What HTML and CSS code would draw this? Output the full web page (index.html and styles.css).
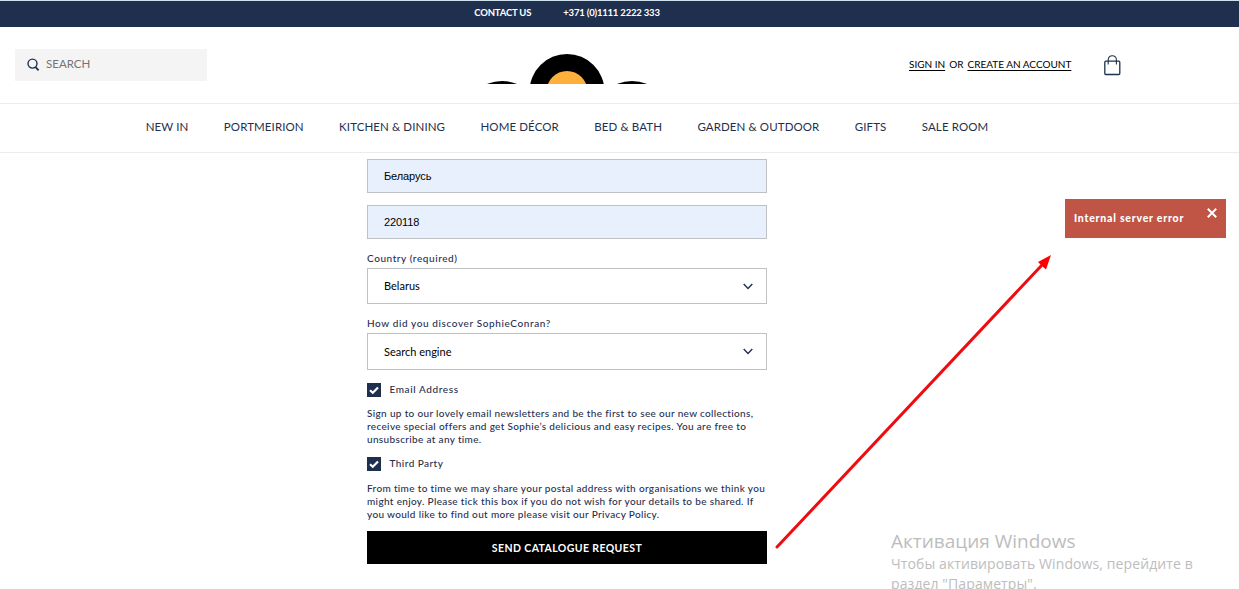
FILE: index.html
```html
<!DOCTYPE html>
<html lang="en">
<head>
<meta charset="utf-8">
<title>Catalogue request</title>
<link rel="stylesheet" href="styles.css">
</head>
<body>
<div class="topbar"><div class="topbar-inner"><span class="contact">CONTACT US</span><span class="phone">+371 (0)1111 2222 333</span></div></div>
<header class="header">
  <div class="search">
    <svg width="13" height="14" viewBox="0 0 13 14" fill="none" stroke="#1f304f"><circle cx="5.5" cy="5.6" r="4.5" stroke-width="1.4"/><path d="M8.6 9.1L11.600 12.4" stroke-width="1.8"/></svg>
    <span>SEARCH</span>
  </div>
  <svg class="logo" width="162" height="30" viewBox="0 0 162 30"><circle cx="81" cy="37.500" r="37.500"/><circle cx="81" cy="37.5" r="20.5" fill="#ffb03b"/><circle cx="16" cy="64.500" r="37.500"/><circle cx="146" cy="64.500" r="37.500"/></svg>
  <div class="account"><a class="signin">SIGN IN</a><span class="or">OR</span><a class="create">CREATE AN ACCOUNT</a></div>
  <svg class="bag" width="18" height="22" viewBox="0 0 18 22" fill="none" stroke="#1f304f" stroke-width="1.3"><rect x=".8" y="6.2" width="15" height="13.3" rx="1"/><path d="M4.2 9.500V5C4.200 2.500 5.800 .8 8.300 .8S12.400 2.500 12.400 5V9.500" stroke-width="1.1"/></svg>
</header>
<nav class="nav">
  <div class="nav-inner"><a>NEW IN</a><a>PORTMEIRION</a><a>KITCHEN &amp; DINING</a><a>HOME DÉCOR</a><a>BED &amp; BATH</a><a>GARDEN &amp; OUTDOOR</a><a>GIFTS</a><a>SALE ROOM</a></div>
</nav>
<main class="form">
  <div class="field filled">Беларусь</div>
  <div class="field filled">220118</div>
  <div class="label">Country (required)</div>
  <div class="field select"><span class="belarus">Belarus</span><svg width="10" height="7" viewBox="0 0 10 7" fill="none" stroke="#1f304f" stroke-width="1.4"><path d="M.7 1L5 5.5L9.3 1"/></svg></div>
  <div class="label discover">How did you discover SophieConran?</div>
  <div class="field select tall"><span class="engine">Search engine</span><svg width="10" height="7" viewBox="0 0 10 7" fill="none" stroke="#1f304f" stroke-width="1.4"><path d="M.7 1L5 5.5L9.3 1"/></svg></div>
  <div class="check"><svg width="14" height="14" viewBox="0 0 14 14"><rect width="14" height="14" fill="#1f304f"/><path d="M3 7.2L5.8 9.8L11 4.4" fill="none" stroke="#fff" stroke-width="2.1"/></svg><span>Email Address</span></div>
  <p class="copy">Sign up to our lovely email newsletters and be the first to see our new collections,<br>receive special offers and get Sophie’s delicious and easy recipes. You are free to<br>unsubscribe at any time.</p>
  <div class="check second"><svg width="14" height="14" viewBox="0 0 14 14"><rect width="14" height="14" fill="#1f304f"/><path d="M3 7.2L5.8 9.8L11 4.4" fill="none" stroke="#fff" stroke-width="2.1"/></svg><span>Third Party</span></div>
  <p class="copy sharing">From time to time we may share your postal address with organisations we think you<br>might enjoy. Please tick this box if you do not wish for your details to be shared. If<br>you would like to find out more please visit our Privacy Policy.</p>
  <div class="submit">SEND CATALOGUE REQUEST</div>
</main>
<div class="toast"><span>Internal server error</span><svg width="10" height="10" viewBox="0 0 10 10" stroke="#fff" stroke-width="2"><path d="M.8 .8L9.2 9.2M9.2 .8L.8 9.2"/></svg></div>
<svg class="arrow" width="290" height="306" viewBox="0 0 290 306"><path d="M7 301L272 19" stroke="#ee0c10" stroke-width="3" stroke-linecap="round"/><path d="M281 9L276 23.500L272 20L268 16Z" fill="#f00"/></svg>
<div class="watermark"><div class="wm-title">Активация Windows</div><div class="wm-text">Чтобы активировать Windows, перейдите в<br>раздел "Параметры".</div></div>
</body>
</html>
```
FILE: styles.css
```css
* { box-sizing: border-box; }
body { margin: 0; width: 1239px; height: 589px; overflow: hidden; position: relative; background: #fff; color: #1f304f; font-family: Lato, sans-serif; white-space: nowrap; }
svg { display: block; flex: none; }
.topbar { height: 27px; background: #1f304f; border-top: 1px solid #cfe0ee; color: #fff; font-size: 9.5px; font-weight: 700; line-height: 24px; }
.topbar-inner { display: flex; justify-content: center; gap: 32px; width: 1134px; letter-spacing: -.18px; }
.header { display: flex; height: 77px; width: 1239px; padding-left: 15px; border-bottom: 1px solid #ececec; }
.search { display: flex; align-items: center; gap: 6px; width: 192px; height: 32px; margin-top: 22px; padding-left: 12px; background: #f4f4f4; color: #747474; font-size: 11.5px; }
.search span { margin-top: -3px; }
.logo { margin: 27px 0 0 279px; }
.account { display: flex; gap: 4px; width: 162px; margin: 30px 0 0 261px; color: #000; font-size: 10px; line-height: 14px; }
.account a { text-decoration: underline; text-underline-offset: 2px; }
.bag { margin: 28px 0 0 33px; }
.nav { height: 49px; border-bottom: 1px solid #ececec; }
.nav-inner { display: flex; justify-content: center; gap: 35.4px; width: 1134px; font-size: 11.5px; line-height: 46px; letter-spacing: .1px; }
.form { width: 400px; margin: 6px 0 0 367px; }
.field { display: flex; align-items: center; height: 34px; margin-bottom: 12px; padding: 0 13px 0 16px; border: 1px solid #bfc1c4; color: #000; font-size: 11px; }
.filled { background: #e8f0fe; font-family: "Liberation Sans", sans-serif; letter-spacing: -.1px; }
.select { justify-content: space-between; height: 36px; margin-bottom: 11px; }
.select span { margin-top: -1px; }
.tall { height: 37px; margin-bottom: 13px; }
.label { height: 17px; line-height: 15px; font-size: 10px; letter-spacing: .57px; font-weight: 500; }
.discover { height: 18px; line-height: 17px; letter-spacing: .6px; }
.check { display: flex; gap: 8.5px; height: 14px; font-size: 10px; line-height: 13px; letter-spacing: .6px; font-weight: 500; }
.second { margin-top: 11px; letter-spacing: .45px; }
.copy { margin: 10px 0 0; font-size: 10px; line-height: 13px; letter-spacing: .34px; font-weight: 500; }
.sharing { margin-top: 11px; }
.submit { height: 33px; margin-top: 10px; background: #000; color: #fff; text-align: center; font-size: 10.5px; line-height: 35px; font-weight: 700; letter-spacing: .4px; }
.toast { position: absolute; left: 1065px; top: 199px; display: flex; justify-content: space-between; width: 161px; height: 39px; padding: 9px 9px 0; background: #c05545; color: #fff; font-size: 10.5px; font-weight: 900; line-height: 20px; letter-spacing: .77px; }
.arrow { position: absolute; left: 770px; top: 246px; }
.watermark { position: absolute; left: 891px; top: 529px; color: #bdbdbd; font-family: "Open Sans", sans-serif; }
.wm-title { font-size: 19px; line-height: 25px; }
.wm-text { font-size: 14px; line-height: 20px; letter-spacing: .1px; }
```
